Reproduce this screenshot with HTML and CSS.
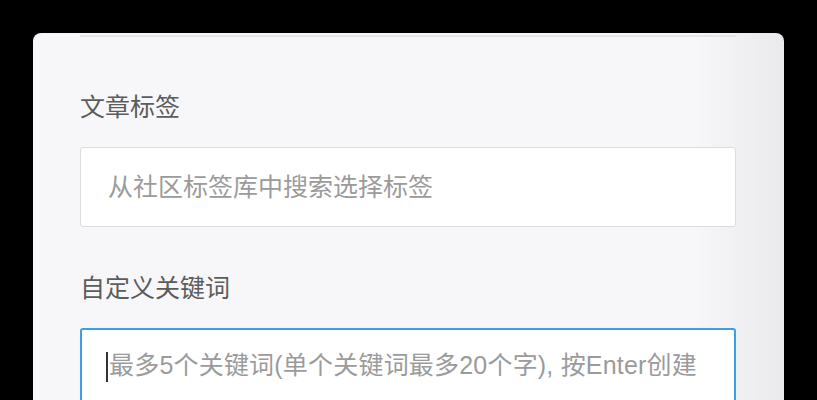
FILE: index.html
```html
<!DOCTYPE html>
<html lang="zh-CN">
<head>
<meta charset="utf-8">
<title>文章标签</title>
<link rel="stylesheet" href="styles.css">
</head>
<body>
<div class="backdrop">
  <div class="card">
    <div class="divider"></div>
    <div class="field field-first">
      <label class="label" for="tags">文章标签</label>
      <input class="input" id="tags" type="text" placeholder="从社区标签库中搜索选择标签">
    </div>
    <div class="field field-second">
      <label class="label" for="keywords">自定义关键词</label>
      <div class="input-wrap">
        <input class="input input-focus" id="keywords" type="text" placeholder="最多5个关键词(单个关键词最多20个字), 按Enter创建">
        <span class="caret"></span>
      </div>
    </div>
  </div>
</div>
</body>
</html>
```
FILE: styles.css
```css
html, body {
  margin: 0;
  padding: 0;
  background: #000;
  height: 100%;
  overflow: hidden;
}
.backdrop {
  padding: 33px 33px 0 33px;
  height: 400px;
  box-sizing: border-box;
  overflow: hidden;
}
.card {
  width: 751px;
  height: 367px;
  overflow: hidden;
  box-sizing: border-box;
  border-radius: 8px 8px 0 0;
  background: linear-gradient(to right, #f7f7f9 0, #f7f7f9 calc(100% - 90px), #eaeaed 100%);
  padding: 2px 48px 0 47px;
  font-family: "Liberation Sans", "Noto Sans CJK SC", sans-serif;
}
.divider {
  height: 2px;
  background: #e5e5e8;
}
.field {
  display: flex;
  flex-direction: column;
}
.field-first {
  margin-top: 52px;
}
.field-second {
  margin-top: 43px;
}
.label {
  font-size: 25px;
  line-height: 36px;
  color: #5c5c5c;
  margin-bottom: 22px;
}
.input {
  box-sizing: border-box;
  width: 100%;
  height: 80px;
  border: 1px solid #dcdcde;
  border-radius: 3px;
  background: #fff;
  padding: 0 27px 0 27px;
  font-family: "Liberation Sans", "Noto Sans CJK SC", sans-serif;
  font-size: 25px;
  color: #333;
  outline: none;
  margin: 0;
}
.input::placeholder {
  color: #9b9b9b;
  opacity: 1;
}
.input-wrap {
  position: relative;
}
.input-focus {
  border: 2px solid #3d9fe3;
  padding: 0 20px 6px 27px;
  letter-spacing: 0.2px;
}
.caret {
  position: absolute;
  left: 26px;
  top: 24px;
  width: 2px;
  height: 30px;
  background: #333;
}
```
